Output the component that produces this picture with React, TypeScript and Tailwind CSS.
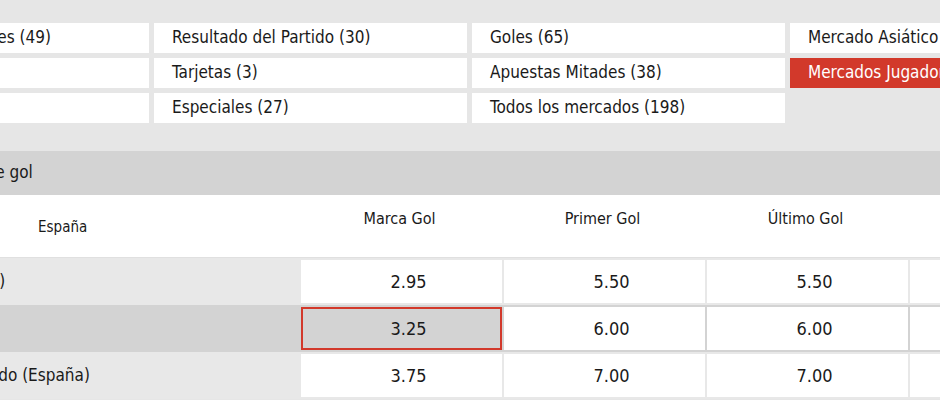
const menu = [
  { label: "Mercados Principales (49)" },
  { label: "Resultado del Partido (30)" },
  { label: "Goles (65)" },
  { label: "Mercado Asiático (22)" },
  { label: "Córners (8)" },
  { label: "Tarjetas (3)" },
  { label: "Apuestas Mitades (38)" },
  { label: "Mercados Jugadores (12)", active: true },
  { label: "Hándicap (5)" },
  { label: "Especiales (27)" },
  { label: "Todos los mercados (198)" },
  null,
];

const rows = [
  { name: "Morata (España)", odds: ["2.95", "5.50", "5.50", "5.50"] },
  { name: "Sin Goleador", odds: ["3.25", "6.00", "6.00", "6.00"], selected: true },
  { name: "Jugador no listado (España)", odds: ["3.75", "7.00", "7.00", "7.00"] },
];

const cols = ["Marca Gol", "Primer Gol", "Último Gol", "Hat-trick"];

export default function App() {
  return (
    <div className="w-[940px] h-[400px] overflow-hidden bg-[#e6e6e6] text-[#1a1a1a] font-['DejaVu_Sans_Condensed','DejaVu_Sans',sans-serif] text-[16px]">
      <div className="-ml-[164px] pt-[23px] grid grid-cols-[repeat(4,313px)] gap-[5px] text-[17px]">
        {menu.map((item, i) =>
          item ? (
            <div
              key={i}
              className={`h-[30px] flex items-center pl-[18px] whitespace-nowrap ${
                item.active ? "bg-[#d2392b] text-white" : "bg-white"
              }`}
            >
              {item.label}
            </div>
          ) : (
            <div key={i} />
          )
        )}
      </div>

      <div className="mt-[28px] h-[44px] bg-[#d3d3d3] flex items-center whitespace-nowrap text-[17px]">
        <span className="-ml-[91px]">Marcador de gol</span>
      </div>

      <div className="h-[63px] bg-white border-b border-[#e0e0e0] flex text-[16px]">
        <div className="w-[297px] shrink-0 flex items-center pl-[38px] pt-[2px] text-[15px]">España</div>
        {cols.map((c, i) => (
          <div key={i} className="w-[201px] shrink-0 ml-[2px] first:ml-0 text-center pt-[12px]">
            {c}
          </div>
        ))}
      </div>

      {rows.map((r, i) => (
        <div
          key={i}
          className={`h-[47px] flex py-[2px] ${r.selected ? "bg-[#d3d3d3]" : "bg-[#e8e8e8]"}`}
        >
          <div className="w-[301px] shrink-0 flex items-center overflow-hidden whitespace-nowrap text-[17px]">
            <span className="-ml-[121px]">{r.name}</span>
          </div>
          {r.odds.map((o, j) => (
            <div
              key={j}
              className={`w-[201px] shrink-0 flex items-center justify-center pl-[14px] text-[18px] ${
                j > 0 ? "ml-[2px]" : ""
              } ${r.selected && j === 0 ? "bg-[#d3d3d3] border-2 border-[#d2392b]" : "bg-white"}`}
            >
              {o}
            </div>
          ))}
        </div>
      ))}
    </div>
  );
}
